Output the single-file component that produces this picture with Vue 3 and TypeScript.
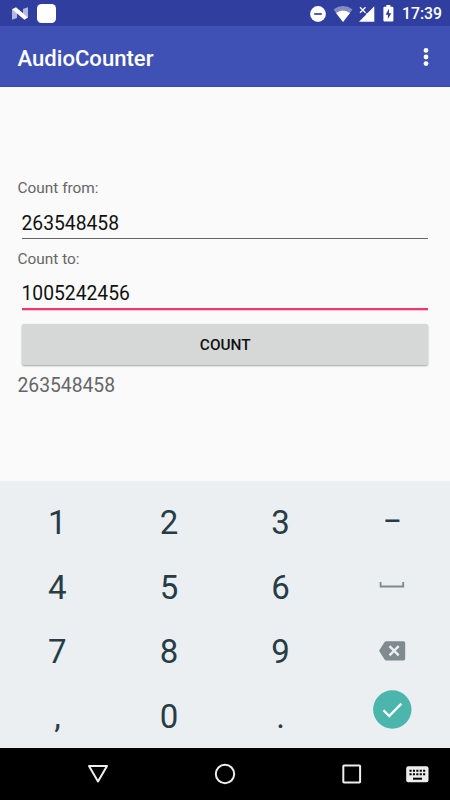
<script setup lang="ts">
import { ref } from 'vue'

const from = ref('263548458')
const to = ref('1005242456')
const current = ref('263548458')

const keys: string[] = ['1', '2', '3', '–', '4', '5', '6', 'space', '7', '8', '9', 'delete', ',', '0', '.', 'done']
</script>

<template>
  <div class="screen">
    <header class="status">
      <svg class="nougat" width="16" height="13" viewBox="0 0 16 13">
        <path d="M0 2.2L5 5.8V11L0 12.8ZM16 .2V10.8L11 7V2Z" fill="#b3b9de" />
        <path d="M0 2.3L4 .2L16 10.5L12.4 12.8Z" fill="#fff" />
      </svg>
      <span class="app-dot"></span>
      <span class="spacer"></span>
      <svg class="dnd" width="16" height="16" viewBox="0 0 16 16">
        <circle cx="8" cy="8" r="7.9" fill="#fff" />
        <path d="M4.2 8H11.8" stroke="#303f9f" stroke-width="1.7" />
      </svg>
      <svg class="wifi" width="20" height="16" viewBox="0 0 20 16">
        <path d="M.5 3.5Q10-3.3 19.5 3.5L10 16Z" fill="#838cc5" />
        <path d="M3 7.1Q10 1.8 17 7.1L10 16Z" fill="#fff" />
      </svg>
      <svg class="signal" width="16" height="16" viewBox="0 0 16 16">
        <path d="M15.3 .2V15.7H0L7.2 8.4V7.2H8.4Z" fill="#fff" />
        <path d="M1 1.2L6.5 6.7M6.5 1.2L1 6.7" stroke="#fff" stroke-width="1.3" />
      </svg>
      <svg class="battery" width="11" height="17" viewBox="0 0 11 17">
        <path d="M3.4 0H7.4V1.8H9.3Q10.4 1.8 10.4 2.9V15.5Q10.4 16.6 9.3 16.6H1.5Q.4 16.6 .4 15.5V2.9Q.4 1.8 1.5 1.8H3.4Z" fill="#fff" />
        <path d="M6 3.8L2.6 9.8H4.9V14L8.3 8.2H6Z" fill="#303f9f" />
      </svg>
      <time>17:39</time>
    </header>

    <div class="toolbar">
      <h1>AudioCounter</h1>
      <svg width="6" height="20" viewBox="0 0 6 20" fill="#fff">
        <circle cx="3" cy="3.4" r="2.4" />
        <circle cx="3" cy="10" r="2.4" />
        <circle cx="3" cy="16.6" r="2.4" />
      </svg>
    </div>

    <main>
      <label for="from">Count from:</label>
      <input id="from" v-model="from" type="text" inputmode="numeric" />
      <label for="to">Count to:</label>
      <input id="to" v-model="to" class="active" type="text" inputmode="numeric" />
      <button class="count" type="button">COUNT</button>
      <output>{{ current }}</output>
    </main>

    <section class="keyboard">
      <div v-for="key in keys" :key="key" class="key">
        <svg v-if="key === 'space'" class="space" width="26" height="6" viewBox="0 0 26 6">
          <path d="M1.6 0V4.5H24.2V0" fill="none" stroke="#7c898d" stroke-width="1.8" />
        </svg>
        <svg v-else-if="key === 'delete'" class="delete" width="27" height="20" viewBox="0 0 27 20">
          <path d="M7.3 .2H24.5Q26.2 .2 26.2 1.9V17.8Q26.2 19.5 24.5 19.5H7.3Q6.2 19.5 5.6 18.6L0 9.85L5.6 1.1Q6.2 .2 7.3 .2Z" fill="#7f8b8f" />
          <path d="M10.5 5.2L19.7 14.4M19.7 5.2L10.5 14.4" stroke="#eceff1" stroke-width="2.4" />
        </svg>
        <svg v-else-if="key === 'done'" class="done" width="39" height="39" viewBox="0 0 39 39">
          <circle cx="19.3" cy="19.5" r="19.2" fill="#4db6ac" />
          <path d="M10.5 20.3L16.2 26L28.4 13.6" fill="none" stroke="#fff" stroke-width="2.3" />
        </svg>
        <span v-else :class="{ dash: key === '–' }">{{ key }}</span>
      </div>
    </section>

    <nav>
      <svg class="back" width="22" height="20" viewBox="0 0 22 20">
        <path d="M2 2H20L11 17.5Z" fill="none" stroke="#eee" stroke-width="2" stroke-linejoin="round" />
      </svg>
      <svg class="home" width="22" height="22" viewBox="0 0 22 22">
        <circle cx="11" cy="11" r="9.2" fill="none" stroke="#eee" stroke-width="2" />
      </svg>
      <svg class="recent" width="20" height="20" viewBox="0 0 20 20">
        <rect x="1.3" y="1.6" width="16.8" height="16.8" rx=".7" fill="none" stroke="#eee" stroke-width="2" />
      </svg>
      <svg class="ime" width="23" height="17" viewBox="0 0 23 17">
        <rect x=".2" y=".3" width="22.3" height="16" rx="2" fill="#eee" />
        <path d="M3.5 4.8H19.5M3.5 8.3H19.5" stroke="#000" stroke-width="2" stroke-dasharray="2.1 1.3" />
        <path d="M7 12.7H16" stroke="#000" stroke-width="2" />
      </svg>
    </nav>
  </div>
</template>

<style>
body {
  margin: 0;
}
</style>

<style scoped>
.screen {
  width: 450px;
  height: 800px;
  display: flex;
  flex-direction: column;
  overflow: hidden;
  background: #fafafa;
  font-family: Roboto, sans-serif;
}

svg {
  display: block;
  flex: none;
}

.status {
  box-sizing: border-box;
  height: 26px;
  flex: none;
  display: flex;
  align-items: center;
  padding: 1px 8px 0 12px;
  background: #303f9f;
  color: #fff;
}

.app-dot {
  width: 19px;
  height: 19px;
  margin: 0 0 1px 8.5px;
  border-radius: 4.5px;
  background: #fff;
}

.spacer {
  flex: 1;
}

.wifi {
  margin-left: 7px;
}

.signal {
  margin-left: 6px;
}

.battery {
  margin-left: 8px;
}

time {
  width: 40px;
  margin-left: 8px;
  font-size: 15.8px;
  line-height: 20px;
  font-weight: 500;
  white-space: nowrap;
}

.toolbar {
  box-sizing: border-box;
  height: 61px;
  flex: none;
  display: flex;
  align-items: center;
  justify-content: space-between;
  padding: 2px 21px 0 17.5px;
  background: #3f51b5;
  border-bottom: 1px solid #354bb1;
  color: #fff;
}

h1 {
  margin: 2px 0 0;
  font-size: 22.1px;
  line-height: 28px;
  font-weight: 500;
}

main {
  box-sizing: border-box;
  height: 394px;
  flex: none;
  display: flex;
  flex-direction: column;
  padding: 91px 17.5px 0;
}

label {
  height: 20px;
  font-size: 15.4px;
  line-height: 21px;
  color: #666;
}

input {
  box-sizing: border-box;
  width: 406px;
  height: 41px;
  margin: 0 0 10px 4px;
  padding: 13px 0 2px;
  border: 0;
  border-bottom: 1px solid #666;
  border-radius: 0;
  outline: 0;
  background: transparent;
  font: 19.3px/25px Roboto, sans-serif;
  color: #111;
}

input.active {
  padding: 12px 0 2px;
  margin-bottom: 14px;
  border-bottom: 2px solid #ec3773;
  box-shadow: 0 1px 0 #ffc0d0;
}

.count {
  width: 406.5px;
  height: 40.5px;
  flex: none;
  margin-left: 4px;
  padding: 1px 0 0 1px;
  border: 0;
  border-radius: 2px;
  background: #d6d8d7;
  box-shadow: 0 1px 2px rgba(0, 0, 0, 0.35);
  font: 500 15.4px/40px Roboto, sans-serif;
  color: #111;
}

output {
  margin-top: 8px;
  font-size: 19.3px;
  line-height: 25px;
  color: #666;
}

.keyboard {
  box-sizing: border-box;
  height: 267px;
  flex: none;
  display: grid;
  grid-template-columns: repeat(4, 111.6px);
  grid-auto-rows: 64.4px;
  padding: 10.2px 0 0 1.6px;
  background: #eceff1;
}

.key {
  display: flex;
  align-items: center;
  justify-content: center;
  font-size: 33px;
  line-height: 64px;
  color: #263d47;
}

.dash {
  margin-top: -3px;
  font-size: 28px;
  font-weight: 500;
}

.space {
  margin-top: -5px;
}

.delete {
  margin-top: -3px;
}

.done {
  margin-top: -14px;
}

nav {
  height: 52px;
  flex: none;
  display: flex;
  align-items: center;
  background: #000;
}

.back {
  margin-left: 87px;
}

.home {
  margin-left: 105px;
}

.recent {
  margin-left: 106px;
}

.ime {
  margin-left: 44px;
}
</style>
